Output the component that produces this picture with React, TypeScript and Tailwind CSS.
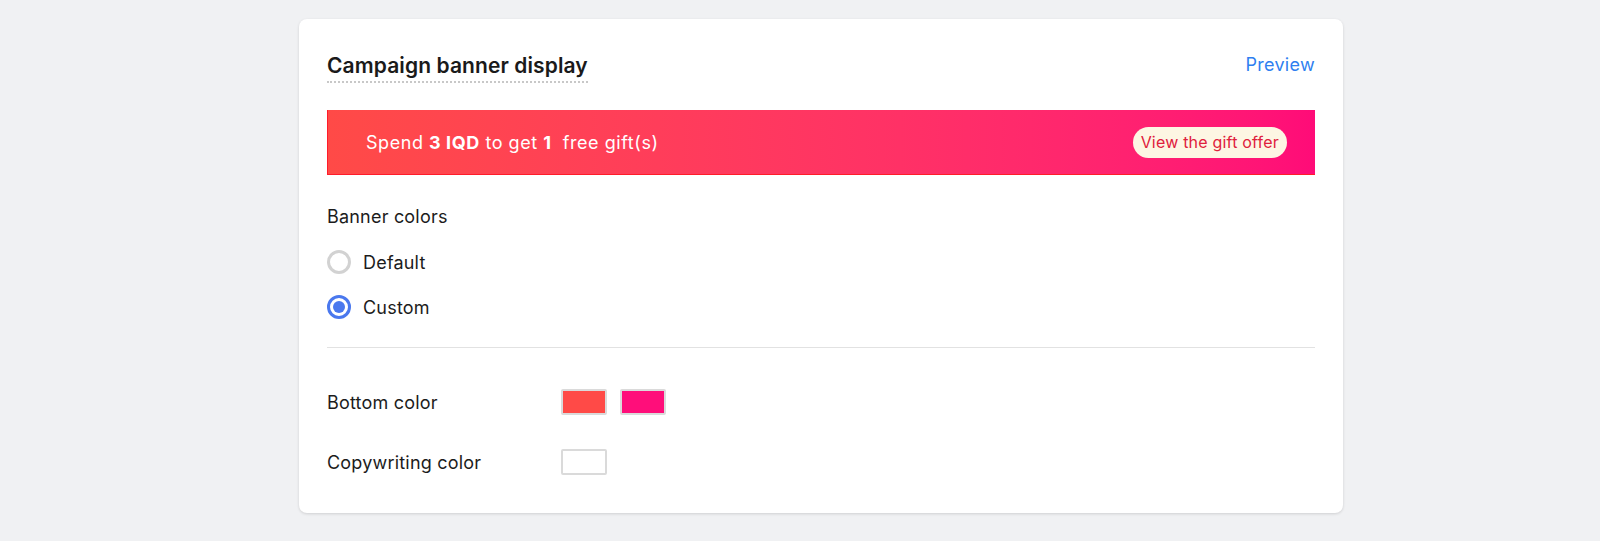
import React from "react";

function Radio({ checked, label }: { checked: boolean; label: string }) {
  return (
    <label className="flex items-center gap-3 h-6">
      {checked ? (
        <span className="w-6 h-6 rounded-full border-[3px] border-[#4a78ee] flex items-center justify-center">
          <span className="w-[12px] h-[12px] rounded-full bg-[#4a78ee]" />
        </span>
      ) : (
        <span className="w-6 h-6 rounded-full border-[3px] border-[#d2d2d2]" />
      )}
      <span className="text-[18px] tracking-[0.2px] text-[#1c1c1c]">{label}</span>
    </label>
  );
}

function Swatch({ color }: { color: string }) {
  return (
    <span
      className="w-[46px] h-[26px] rounded-[2px] border-2 border-[#dadada] block"
      style={{ backgroundColor: color }}
    />
  );
}

export default function App() {
  return (
    <div
      className="min-h-[541px] bg-[#f0f1f3] flex justify-start pl-[299px] pt-[19px]"
      style={{ fontFamily: "Inter, 'Noto Sans', sans-serif" }}
    >
      <div className="w-[1044px] h-[494px] bg-white rounded-lg shadow-[0_1px_3px_rgba(0,0,0,0.14)] px-[28px] pt-[32px]">
        <div className="flex items-start justify-between">
          <h2 className="text-[21px] leading-[30px] font-semibold tracking-[0.1px] text-[#1a1a1a] border-b-2 border-dotted border-[#c8c8c8]">
            Campaign banner display
          </h2>
          <a className="text-[18px] tracking-[0.3px] leading-[28px] text-[#2f7ff0]">Preview</a>
        </div>

        <div className="mt-[27px] h-[65px] flex items-center justify-between pl-[38px] pr-[28px] bg-gradient-to-r from-[#ff4a47] to-[#ff0b78] border-l border-b border-[#ff1c2a]">
          <span className="text-[18px] tracking-[0.55px] text-white whitespace-pre">
            Spend <b className="font-bold">3 IQD</b> to get <b className="font-bold">1</b>{"  "}free gift(s)
          </span>
          <span className="h-[31px] px-[8px] rounded-full bg-[#fdf6e3] text-[#e0203c] text-[16px] tracking-[0.2px] flex items-center">
            View the gift offer
          </span>
        </div>

        <div className="mt-[30px] text-[18px] tracking-[0.2px] text-[#1c1c1c] leading-[24px]">Banner colors</div>
        <div className="mt-[21px] flex flex-col gap-[21px]">
          <Radio checked={false} label="Default" />
          <Radio checked={true} label="Custom" />
        </div>

        <div className="mt-[28px] h-px bg-[#e2e2e2]" />

        <div className="mt-[41px] flex items-center h-[26px]">
          <span className="w-[234px] text-[18px] tracking-[0.2px] text-[#1c1c1c]">Bottom color</span>
          <div className="flex gap-[13px]">
            <Swatch color="#ff4a47" />
            <Swatch color="#ff0e7a" />
          </div>
        </div>
        <div className="mt-[34px] flex items-center h-[26px]">
          <span className="w-[234px] text-[18px] tracking-[0.2px] text-[#1c1c1c]">Copywriting color</span>
          <Swatch color="#ffffff" />
        </div>
      </div>
    </div>
  );
}
